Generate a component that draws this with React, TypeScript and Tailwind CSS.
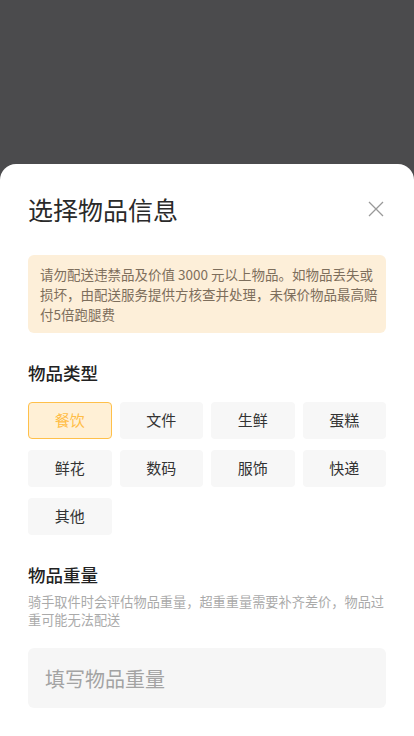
import React, { useState } from "react";

const categories = ["餐饮", "文件", "生鲜", "蛋糕", "鲜花", "数码", "服饰", "快递", "其他"];

export default function App() {
  const [selected, setSelected] = useState("餐饮");
  const [weight, setWeight] = useState("");

  return (
    <div
      className="flex h-[736px] w-full flex-col bg-[#4b4b4d]"
      style={{ fontFamily: '"Noto Sans CJK SC", "Noto Sans", sans-serif' }}
    >
      <div className="h-[164px] shrink-0" />
      {/* bottom sheet */}
      <div className="flex-1 rounded-t-[16px] bg-white px-[28px] pt-[29px]">
        <div className="flex items-center justify-between">
          <h1 className="text-[25px] leading-[32px] font-normal text-[#2a2a2a]">选择物品信息</h1>
          <button className="mr-[2px] text-[#999]" aria-label="关闭">
            <svg width="16" height="16" viewBox="0 0 16 16" fill="none" stroke="currentColor" strokeWidth="1.3">
              <path d="M1 1 L15 15 M15 1 L1 15" />
            </svg>
          </button>
        </div>

        <div className="mt-[30px] rounded-[6px] bg-[#fdefd9] py-[9px] pr-[8px] pl-[12px] text-[13.5px] leading-[20px] text-[#7d6e5c]">
          请勿配送违禁品及价值 3000 元以上物品。如物品丢失或损坏，由配送服务提供方核查并处理，未保价物品最高赔付5倍跑腿费
        </div>

        <h2 className="mt-[28px] text-[17.5px] leading-[24px] font-medium text-[#222]">物品类型</h2>
        <div className="mt-[17px] grid grid-cols-4 gap-x-2 gap-y-[11px]">
          {categories.map((c) => (
            <button
              key={c}
              onClick={() => setSelected(c)}
              className={`h-[37px] rounded-[4px] border-[1.5px] text-[15px] ${
                c === selected
                  ? "border-[#ffc04a] bg-[#fff0d6] text-[#ffbd45]"
                  : "border-transparent bg-[#f7f7f7] text-[#333]"
              }`}
            >
              {c}
            </button>
          ))}
        </div>

        <h2 className="mt-[28px] text-[17.5px] leading-[24px] font-medium text-[#222]">物品重量</h2>
        <p className="mt-[6px] text-[13.2px] leading-[18px] text-[#aaa]">
          骑手取件时会评估物品重量，超重重量需要补齐差价，物品过重可能无法配送
        </p>
        <input
          value={weight}
          onChange={(e) => setWeight(e.target.value)}
          placeholder="填写物品重量"
          className="mt-[19px] h-[60px] w-full rounded-[6px] bg-[#f6f6f6] px-[17px] text-[20px] text-[#333] outline-none placeholder:text-[#a3a3a3]"
        />
      </div>
    </div>
  );
}
